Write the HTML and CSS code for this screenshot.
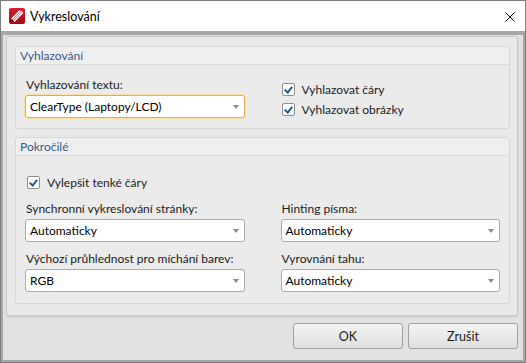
FILE: index.html
```html
<!DOCTYPE html>
<html lang="cs">
<head>
  <meta charset="UTF-8">
  <title>Vykreslování</title>
  <link rel="stylesheet" href="styles.css">
</head>
<body>
  <div class="window">
    <div class="titlebar">
      <svg class="app-icon" width="16" height="16" viewBox="0 0 16 16">
        <defs>
          <linearGradient id="red" x1="0" y1="0" x2="0" y2="1">
            <stop offset="0" stop-color="#d8202c"/>
            <stop offset="1" stop-color="#9c0a14"/>
          </linearGradient>
        </defs>
        <rect x="0" y="0" width="16" height="16" rx="2" fill="url(#red)"/>
        <path d="M3 13 L13 3 M5 13.5 L14 4.5 M2.5 11 L11 2.5" stroke="#fff" stroke-width="1.2" fill="none"/>
        <path d="M2 14 L4 12" stroke="#5a0008" stroke-width="1.5"/>
      </svg>
      <span class="title">Vykreslování</span>
      <svg class="close" width="10" height="10" viewBox="0 0 10 10">
        <path d="M0.5 0.5 L9.5 9.5 M9.5 0.5 L0.5 9.5" stroke="#111" stroke-width="1" fill="none"/>
      </svg>
    </div>

    <div class="client">
      <div class="panel">
        <section class="group">
          <div class="group-head">Vyhlazování</div>
          <div class="group-body cols">
            <div class="field">
              <div class="label">Vyhlazování textu:</div>
              <div class="select focused">ClearType (Laptopy/LCD)<span class="arrow"></span></div>
            </div>
            <div class="checks">
              <div class="check"><span class="box"></span>Vyhlazovat čáry</div>
              <div class="check"><span class="box"></span>Vyhlazovat obrázky</div>
            </div>
          </div>
        </section>

        <section class="group">
          <div class="group-head">Pokročilé</div>
          <div class="group-body cols advanced">
            <div class="check wide"><span class="box"></span>Vylepšit tenké čáry</div>
            <div class="field">
              <div class="label">Synchronní vykreslování stránky:</div>
              <div class="select">Automaticky<span class="arrow"></span></div>
            </div>
            <div class="field">
              <div class="label">Hinting písma:</div>
              <div class="select">Automaticky<span class="arrow"></span></div>
            </div>
            <div class="field">
              <div class="label">Výchozí průhlednost pro míchání barev:</div>
              <div class="select">RGB<span class="arrow"></span></div>
            </div>
            <div class="field">
              <div class="label">Vyrovnání tahu:</div>
              <div class="select">Automaticky<span class="arrow"></span></div>
            </div>
          </div>
        </section>
      </div>

      <div class="buttons">
        <button class="btn">OK</button>
        <button class="btn">Zrušit</button>
      </div>
    </div>
  </div>
</body>
</html>
```

FILE: styles.css
```css
body {
  margin: 0;
  font-family: Lato, 'Liberation Sans', sans-serif;
  font-size: 12px;
  color: #1b1b1b;
  background: #fff;
}

.window {
  width: 526px;
  height: 363px;
  box-sizing: border-box;
  border: 1px solid #7c7c7c;
  display: flex;
  flex-direction: column;
}

/* title bar */
.titlebar {
  height: 30px;
  background: #fff;
  display: flex;
  align-items: center;
  padding-left: 8px;
  padding-right: 10px;
  flex-shrink: 0;
}

.app-icon {
  margin-top: -1px;
}

.title {
  margin-left: 5px;
  font-size: 12.5px;
  color: #000;
  flex: 1;
}

.close {
  margin-top: 1px;
}

/* dialog body */
.client {
  flex: 1;
  background: #e2e2e2;
  border: 2px solid #a7a7a7;
  border-top-width: 4px;
  padding: 1px 5px 0 3px;
  display: flex;
  flex-direction: column;
}

.panel {
  background: #e9e9e9;
  border: 1px solid #c9c9c9;
  border-radius: 3px;
  box-shadow: 0 1px 2px rgba(0, 0, 0, 0.12);
  padding: 9px 7px 11px 8px;
  display: flex;
  flex-direction: column;
  gap: 8px;
}

.group {
  border: 1px solid #d6d6d6;
  border-radius: 3px;
  background: #ebebeb;
}

.group-head {
  height: 17px;
  line-height: 17px;
  padding-left: 4px;
  color: #35598c;
  font-size: 12px;
  background: #efefef;
  border-bottom: 1px solid #dcdcdc;
  border-radius: 3px 3px 0 0;
}

.group-body {
  padding: 12px 9px 9px 9px;
}

.cols {
  display: grid;
  grid-template-columns: 1fr 1fr;
  column-gap: 36px;
}

.advanced {
  padding-top: 18px;
  padding-bottom: 11px;
  row-gap: 9px;
}

.label {
  height: 16px;
  line-height: 16px;
  padding-left: 1px;
}

.select {
  position: relative;
  margin-top: 2px;
  height: 23px;
  line-height: 21px;
  box-sizing: border-box;
  border: 1px solid #aaaaaa;
  border-radius: 3px;
  background: #fff;
  padding-left: 4px;
  color: #000;
}

.select.focused {
  border-color: #dcae4e;
  box-shadow: 0 0 0 1px #fbe2a2;
}

.arrow {
  position: absolute;
  right: 5px;
  top: 9px;
  width: 0;
  height: 0;
  border-left: 3.5px solid transparent;
  border-right: 3.5px solid transparent;
  border-top: 4px solid #8a8a8a;
}

.checks {
  padding-top: 2px;
  padding-left: 1px;
}

.check {
  display: flex;
  align-items: center;
  height: 20px;
}

.check.wide {
  grid-column: 1 / -1;
  height: 16px;
  padding-left: 2px;
  margin-bottom: 2px;
}

.box {
  width: 13px;
  height: 13px;
  box-sizing: border-box;
  border: 1px solid #8e8e8e;
  border-radius: 2px;
  background: #fff;
  margin-right: 7px;
  position: relative;
}

.box::after {
  content: "";
  position: absolute;
  left: 3px;
  top: 1px;
  width: 3px;
  height: 6px;
  border: solid #2a5a8e;
  border-width: 0 2px 2px 0;
  transform: rotate(40deg);
}

/* bottom buttons */
.buttons {
  display: flex;
  justify-content: flex-end;
  gap: 5px;
  margin-top: 7px;
}

.btn {
  width: 110px;
  height: 26px;
  font-family: inherit;
  font-size: 12.5px;
  color: #1b1b1b;
  border: 1px solid #9e9e9e;
  border-radius: 3px;
  background: linear-gradient(#f4f4f4, #dedede);
  padding: 0;
}
```
